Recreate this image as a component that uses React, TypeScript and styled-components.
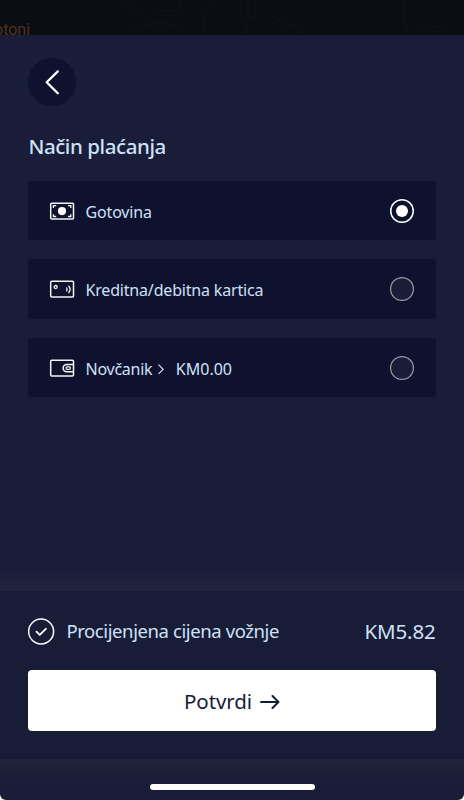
import React, { useState } from "react";
import styled, { createGlobalStyle } from "styled-components";

const GlobalStyle = createGlobalStyle`
  * { box-sizing: border-box; }
  html, body, #root { height: 100%; }
  body { margin: 0; background: #fff; overflow: hidden; }
`;

const Screen = styled.main`
  width: 464px;
  height: 800px;
  display: flex;
  flex-direction: column;
  overflow: hidden;
  background: #191d37;
  border-radius: 0 0 6px 6px;
  color: #cfe1f8;
  font-family: "Noto Sans", sans-serif;
`;

const MapStrip = styled.div`
  position: relative;
  flex: none;
  height: 34.5px;
  overflow: hidden;
  background: #0a0d12;
  svg { display: block; }
`;

const PlaceName = styled.span`
  position: absolute;
  left: -6px;
  top: 21px;
  font: 16px/18px Roboto, sans-serif;
  color: #503120;
`;

const Content = styled.section`
  flex: 1;
  display: flex;
  flex-direction: column;
  padding: 23.5px 28.4px 0;
`;

const BackButton = styled.button`
  width: 48px;
  height: 48px;
  padding: 0;
  border: 0;
  border-radius: 50%;
  background: #0e122e;
  svg { display: block; }
`;

const Title = styled.h1`
  margin: 24px 0 19px;
  height: 32px;
  font-size: 20.5px;
  line-height: 32px;
  font-weight: 500;
  letter-spacing: -0.42px;
  white-space: nowrap;
`;

const Options = styled.div`
  display: flex;
  flex-direction: column;
  gap: 19.1px;
`;

const Option = styled.div`
  height: 59.4px;
  display: flex;
  align-items: center;
  padding: 0 21.5px 0 20.6px;
  border-radius: 4px;
  background: #0e122e;
  svg { flex: none; display: block; }
`;

const Label = styled.span<{ $spacing: number }>`
  margin-left: 10.5px;
  padding-top: 2.4px;
  font-size: 16px;
  line-height: 24px;
  letter-spacing: ${(p) => p.$spacing}px;
  white-space: nowrap;
`;

const Amount = styled(Label)`
  margin-left: 11px;
`;

const Radio = styled.button<{ $on: boolean }>`
  width: 24px;
  height: 24px;
  margin-left: auto;
  padding: 0;
  display: grid;
  place-items: center;
  border-radius: 50%;
  box-shadow: inset 0 0 0 ${(p) => (p.$on ? "1.5px #fff" : "1.2px #9b9ca3")};
  border: 0;
  background: ${(p) => (p.$on ? "#0e122e" : "#191d37")};
  &::after {
    content: "";
    width: 12px;
    height: 12px;
    border-radius: 50%;
    background: ${(p) => (p.$on ? "#fff" : "transparent")};
  }
`;

const Fade = styled.div<{ $up?: boolean }>`
  flex: none;
  height: 20px;
  background: linear-gradient(${(p) => (p.$up ? "to top" : "to bottom")}, #22253e, #191d37);
`;

const Summary = styled.footer`
  flex: none;
  height: 168px;
  padding: 23px 28.4px 0 28.4px;
  background: #181c36;
`;

const PriceRow = styled.div`
  height: 34px;
  display: flex;
  align-items: center;
  svg { flex: none; display: block; }
`;

const PriceLabel = styled.span`
  margin-left: 11px;
  font-size: 18.5px;
  line-height: 30px;
  letter-spacing: -0.4px;
  white-space: nowrap;
`;

const Price = styled.span`
  margin-left: auto;
  font-size: 20.5px;
  line-height: 30px;
  letter-spacing: -0.15px;
`;

const Confirm = styled.button`
  width: 100%;
  height: 61px;
  margin-top: 22px;
  padding: 0;
  display: flex;
  align-items: center;
  justify-content: center;
  gap: 8px;
  border: 0;
  border-radius: 4px;
  background: #fff;
  color: #151a38;
  font: 400 20.5px/30px "Noto Sans", sans-serif;
  letter-spacing: -0.1px;
`;

const HomeArea = styled.div`
  flex: none;
  height: 21px;
  display: flex;
  justify-content: center;
  padding-top: 5px;
`;

const HomeBar = styled.div`
  width: 165px;
  height: 6px;
  border-radius: 3px;
  background: #fff;
`;

const CashIcon = () => (
  <svg width="26" height="24" viewBox="0 0 26 24" fill="none" stroke="#f4f4f4">
    <rect x="1.7" y="4.2" width="22.8" height="15.8" rx="1" strokeWidth="1.5" />
    <path d="M4.4 9V6.7h2.8M19 6.7h2.8V9M4.4 15.2v2.3h2.8M19 17.5h2.8v-2.3" strokeWidth="1.3" />
    <circle cx="13" cy="12.1" r="4.1" fill="#fff" stroke="none" />
  </svg>
);

const CardIcon = () => (
  <svg width="26" height="24" viewBox="0 0 26 24" fill="none" stroke="#f4f4f4" strokeLinecap="round">
    <rect x="1.7" y="4.2" width="22.8" height="15.8" rx="1" strokeWidth="1.5" />
    <circle cx="6.7" cy="10" r="1.5" strokeWidth="1.3" />
    <path d="M17.6 10.9q1.2 1.5 0 3M19.8 9.3q2.7 3.1 0 6.2" strokeWidth="1.3" />
  </svg>
);

const WalletIcon = () => (
  <svg width="26" height="24" viewBox="0 0 26 24" fill="none" stroke="#f4f4f4">
    <rect x="1.7" y="4.2" width="22.8" height="15.8" rx="1" strokeWidth="1.5" />
    <path d="M24.3 8.4h-6.5a3.7 3.7 0 0 0 0 7.4h6.5" strokeWidth="1.5" />
    <rect x="17" y="10.9" width="4.4" height="2.4" rx="1.1" strokeWidth="1.2" />
  </svg>
);

const Chevron = () => (
  <svg width="8" height="12" viewBox="0 0 8 12" fill="none" stroke="#e0e3ea" strokeWidth="1.2">
    <path d="M1.5 1.7l4.6 4.6-4.6 4.6" />
  </svg>
);

const ChevronSlot = styled.span`
  margin-left: 4.5px;
  padding-top: 3px;
`;

export default function App() {
  const [selected, setSelected] = useState(0);
  const radio = (i: number, name: string) => (
    <Radio $on={selected === i} aria-label={name} onClick={() => setSelected(i)} />
  );
  return (
    <>
      <GlobalStyle />
      <Screen>
        <MapStrip>
          <svg width="464" height="35" fill="none" stroke="#101419">
            <path d="M121 0q10 9 19 11l13 13 7-13 19-1 1-10M153 24l-21 5M153 24q20-3 30 9M215 0q-14 14-11 35M248 0v18l8 0M246 20v15M270 15l15 9 14 3 4 8M400 0l4 2v18l4 13M418 31q15-8 26-3" />
          </svg>
          <PlaceName>otoni</PlaceName>
        </MapStrip>
        <Content>
          <BackButton aria-label="Natrag">
            <svg width="48" height="48" fill="none" stroke="#fff" strokeWidth="2.3" strokeLinecap="round" strokeLinejoin="round">
              <path d="M29.8 13.4L18.7 24.2l11.1 11" />
            </svg>
          </BackButton>
          <Title>Način plaćanja</Title>
          <Options>
            <Option>
              <CashIcon />
              <Label $spacing={-0.15}>Gotovina</Label>
              {radio(0, "Gotovina")}
            </Option>
            <Option>
              <CardIcon />
              <Label $spacing={-0.18}>Kreditna/debitna kartica</Label>
              {radio(1, "Kreditna/debitna kartica")}
            </Option>
            <Option>
              <WalletIcon />
              <Label $spacing={-0.25}>Novčanik</Label>
              <ChevronSlot><Chevron /></ChevronSlot>
              <Amount $spacing={0}>KM0.00</Amount>
              {radio(2, "Novčanik")}
            </Option>
          </Options>
        </Content>
        <Fade $up />
        <Summary>
          <PriceRow>
            <svg width="27" height="27" fill="none" stroke="#fff" strokeLinecap="round" strokeLinejoin="round">
              <circle cx="13.1" cy="13.5" r="12.5" strokeWidth="1.5" />
              <path d="M8.5 13.7l3.2 3.1 6.2-6" strokeWidth="1.8" />
            </svg>
            <PriceLabel>Procijenjena cijena vožnje</PriceLabel>
            <Price>KM5.82</Price>
          </PriceRow>
          <Confirm>
            Potvrdi
            <svg width="20" height="16" fill="none" stroke="#151a38" strokeWidth="2" strokeLinecap="round" strokeLinejoin="round">
              <path d="M1 9h17.5M12.5 3l6 6-6 6" />
            </svg>
          </Confirm>
        </Summary>
        <Fade />
        <HomeArea><HomeBar /></HomeArea>
      </Screen>
    </>
  );
}
